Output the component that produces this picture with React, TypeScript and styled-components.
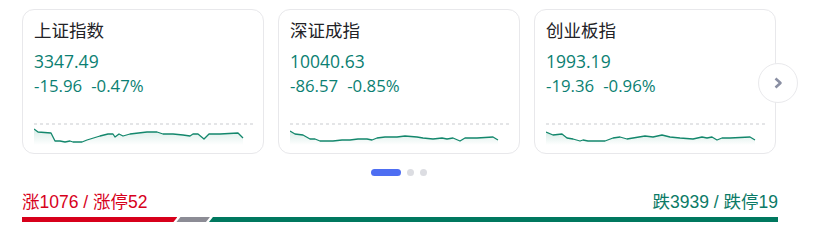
import React from "react";
import styled, { createGlobalStyle } from "styled-components";

const GlobalStyle = createGlobalStyle`
  body {
    margin: 0;
    background: #ffffff;
    font-family: "Open Sans", "Noto Sans CJK SC", sans-serif;
  }
`;

const Page = styled.div`
  width: 756px;
  padding: 9px 0 0 22px;
`;

const Carousel = styled.div`
  position: relative;
  width: 754px;
`;

const CardRow = styled.div`
  display: flex;
  gap: 14px;
`;

const Card = styled.div`
  box-sizing: border-box;
  width: 242px;
  height: 145px;
  border: 1px solid #e8e8eb;
  border-radius: 12px;
  padding: 8px 11px 8px 11px;
  display: flex;
  flex-direction: column;
`;

const Title = styled.div`
  font-family: "Noto Sans CJK SC", sans-serif;
  font-size: 17.5px;
  line-height: 24px;
  color: #222226;
`;

const Price = styled.div`
  margin-top: 7px;
  font-size: 17.5px;
  line-height: 24px;
  color: #0b7f72;
`;

const Change = styled.div`
  margin-top: 2px;
  font-size: 16.8px;
  line-height: 22px;
  color: #0b7f72;
  display: flex;
  gap: 9px;
`;

const Chart = styled.svg`
  margin-top: auto;
  display: block;
`;

const NextButton = styled.button`
  position: absolute;
  right: -22px;
  top: 54px;
  width: 40px;
  height: 40px;
  border-radius: 50%;
  border: 1px solid #e9e9ec;
  background: #ffffff;
  padding: 0;
  display: flex;
  align-items: center;
  justify-content: center;
`;

const Dots = styled.div`
  display: flex;
  justify-content: center;
  align-items: center;
  gap: 6px;
  margin-top: 14px;
  height: 8px;
`;

const Dot = styled.span<{ $active?: boolean }>`
  display: block;
  width: ${(p) => (p.$active ? "30px" : "7px")};
  height: 7px;
  border-radius: 4px;
  background: ${(p) => (p.$active ? "#4e6ef2" : "#dcdde2")};
`;

const Breadth = styled.div`
  margin-top: 16px;
  width: 756px;
`;

const Labels = styled.div`
  display: flex;
  justify-content: space-between;
  font-family: "Liberation Sans", "Noto Sans CJK SC", sans-serif;
  font-size: 17.5px;
  line-height: 21px;
`;

const Label = styled.span<{ $color: string }>`
  color: ${(p) => p.$color};
`;

const Bar = styled.div`
  display: flex;
  height: 5px;
  margin-top: 4px;
`;

const Segment = styled.div<{ $color: string; $kind: "start" | "mid" | "end" }>`
  height: 100%;
  background: ${(p) => p.$color};
  margin-left: ${(p) => (p.$kind === "start" ? "0" : "-1px")};
  clip-path: ${(p) =>
    p.$kind === "start"
      ? "polygon(0 0, 100% 0, calc(100% - 4px) 100%, 0 100%)"
      : p.$kind === "mid"
      ? "polygon(4px 0, 100% 0, calc(100% - 4px) 100%, 0 100%)"
      : "polygon(4px 0, 100% 0, 100% 100%, 0 100%)"};
`;

type Pt = [number, number];

const indices: { name: string; price: string; diff: string; pct: string; line: Pt[] }[] = [
  {
    name: "上证指数",
    price: "3347.49",
    diff: "-15.96",
    pct: "-0.47%",
    line: [
      [0, 6], [4, 9], [17, 10], [21, 18], [26, 18], [31, 19], [36, 18], [39, 19], [48, 19],
      [53, 17], [66, 13], [74, 11], [79, 11], [81, 14], [85, 11], [89, 13], [96, 11],
      [113, 9], [119, 9], [123, 9], [129, 11], [139, 11], [149, 12], [156, 13], [159, 11],
      [164, 11], [170, 16], [175, 11], [186, 11], [204, 10], [209, 15],
    ],
  },
  {
    name: "深证成指",
    price: "10040.63",
    diff: "-86.57",
    pct: "-0.85%",
    line: [
      [0, 8], [5, 11], [13, 12], [20, 16], [25, 16], [30, 18], [38, 18], [43, 18], [52, 17],
      [60, 17], [68, 16], [77, 16], [82, 17], [87, 15], [95, 14], [107, 14], [115, 13],
      [127, 14], [133, 15], [143, 16], [152, 15], [157, 16], [163, 15], [170, 18], [175, 15],
      [187, 15], [203, 14], [208, 17],
    ],
  },
  {
    name: "创业板指",
    price: "1993.19",
    diff: "-19.36",
    pct: "-0.96%",
    line: [
      [0, 9], [7, 12], [16, 11], [21, 15], [27, 16], [34, 18], [37, 17], [42, 18], [49, 18],
      [59, 18], [67, 15], [74, 14], [81, 16], [87, 15], [99, 13], [107, 14], [116, 12],
      [124, 14], [134, 15], [147, 16], [156, 14], [161, 15], [166, 14], [171, 17], [176, 15],
      [184, 15], [204, 14], [209, 17],
    ],
  },
];

function Spark({ pts, id }: { pts: Pt[]; id: string }) {
  const d = pts.map((p, i) => `${i ? "L" : "M"}${p[0]},${p[1]}`).join(" ");
  const last = pts[pts.length - 1];
  const area = `${d} L${last[0]},22 L0,22 Z`;
  return (
    <Chart width="220" height="22" viewBox="0 0 220 22">
      <defs>
        <linearGradient id={id} x1="0" y1="0" x2="0" y2="1">
          <stop offset="0" stopColor="#0b8a6a" stopOpacity="0.16" />
          <stop offset="1" stopColor="#0b8a6a" stopOpacity="0" />
        </linearGradient>
      </defs>
      <line x1="0" y1="1" x2="220" y2="1" stroke="#dcdde0" strokeWidth="1.5" strokeDasharray="3 3" />
      <path d={area} fill={`url(#${id})`} />
      <path d={d} fill="none" stroke="#13876c" strokeWidth="1.3" strokeLinejoin="round" />
    </Chart>
  );
}

export default function App() {
  return (
    <>
      <GlobalStyle />
      <Page>
        <Carousel>
          <CardRow>
            {indices.map((it, i) => (
              <Card key={it.name}>
                <Title>{it.name}</Title>
                <Price>{it.price}</Price>
                <Change>
                  <span>{it.diff}</span>
                  <span>{it.pct}</span>
                </Change>
                <Spark pts={it.line} id={`g${i}`} />
              </Card>
            ))}
          </CardRow>
          <NextButton aria-label="next">
            <svg width="14" height="14" viewBox="0 0 14 14">
              <path d="M4.5 2.5 L9.5 7 L4.5 11.5" fill="none" stroke="#8a8fa3" strokeWidth="2.6" strokeLinejoin="round" />
            </svg>
          </NextButton>
          <Dots>
            <Dot $active />
            <Dot />
            <Dot />
          </Dots>
        </Carousel>
        <Breadth>
          <Labels>
            <Label $color="#d7001b">涨1076 / 涨停52</Label>
            <Label $color="#0b7a66">跌3939 / 跌停19</Label>
          </Labels>
          <Bar>
            <Segment $color="#d7001b" $kind="start" style={{ flex: 1076 }} />
            <Segment $color="#8c8c95" $kind="mid" style={{ flex: 232 }} />
            <Segment $color="#00785f" $kind="end" style={{ flex: 3939 }} />
          </Bar>
        </Breadth>
      </Page>
    </>
  );
}
